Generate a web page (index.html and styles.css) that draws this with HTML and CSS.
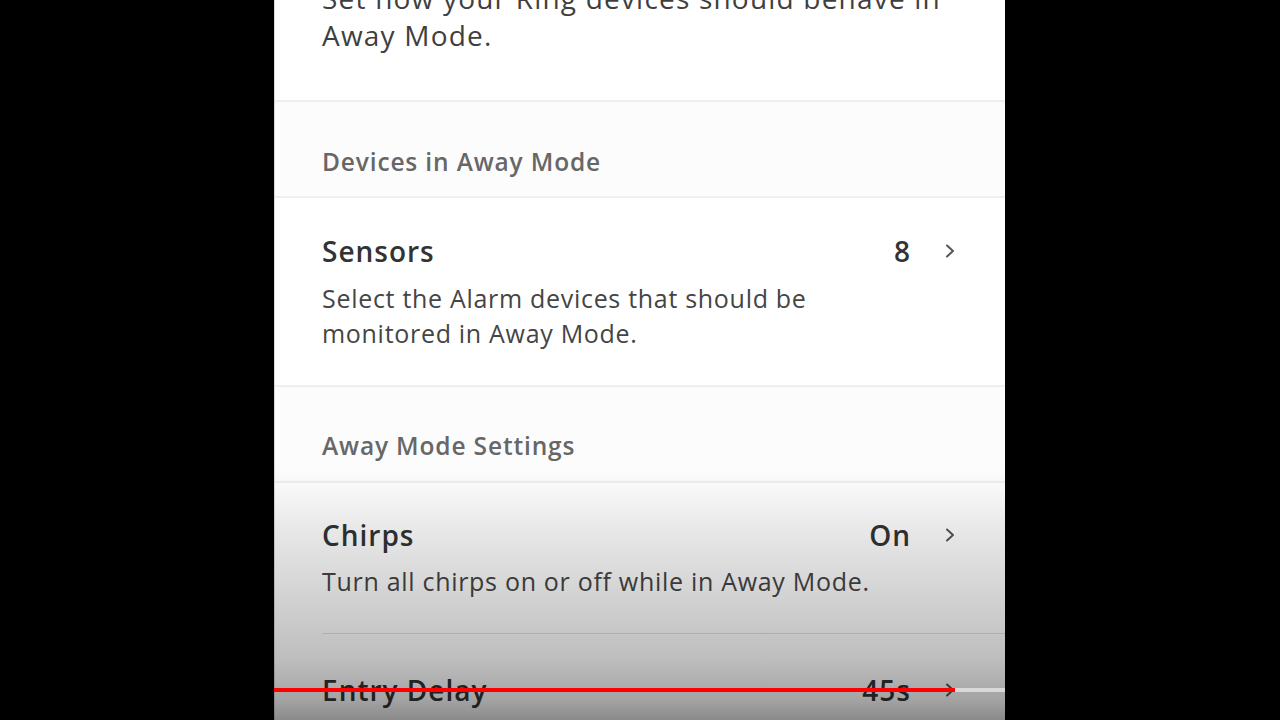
FILE: index.html
```html
<!DOCTYPE html>
<html lang="en">
<head>
<meta charset="utf-8">
<title>Away Mode</title>
<link rel="stylesheet" href="styles.css">
</head>
<body>
<div class="screen">
  <section class="intro">
    <p class="intro-text">Set how your Ring devices should behave in Away Mode.</p>
  </section>
  <div class="section-head">Devices in Away Mode</div>
  <div class="row row-sensors">
    <div class="row-top">
      <span class="row-title">Sensors</span>
      <span class="row-value">8</span>
      <svg class="chev" width="12" height="16" viewBox="0 0 12 16"><path d="M3 2.5 L9 8 L3 13.5" fill="none" stroke="#555" stroke-width="2" stroke-linecap="round" stroke-linejoin="round"/></svg>
    </div>
    <p class="row-desc">Select the Alarm devices that should be<br>monitored in Away Mode.</p>
  </div>
  <div class="section-head section-head-2">Away Mode Settings</div>
  <div class="row row-chirps">
    <div class="row-top">
      <span class="row-title">Chirps</span>
      <span class="row-value">On</span>
      <svg class="chev" width="12" height="16" viewBox="0 0 12 16"><path d="M3 2.5 L9 8 L3 13.5" fill="none" stroke="#555" stroke-width="2" stroke-linecap="round" stroke-linejoin="round"/></svg>
    </div>
    <p class="row-desc row-desc-tight">Turn all chirps on or off while in Away Mode.</p>
  </div>
  <div class="row row-entry">
    <div class="row-top">
      <span class="row-title">Entry Delay</span>
      <span class="row-value">45s</span>
      <svg class="chev" width="12" height="16" viewBox="0 0 12 16"><path d="M3 2.5 L9 8 L3 13.5" fill="none" stroke="#555" stroke-width="2" stroke-linecap="round" stroke-linejoin="round"/></svg>
    </div>
  </div>
</div>
<div class="shade"></div>
<div class="progress">
  <div class="progress-played"></div>
  <div class="progress-rest"></div>
</div>
</body>
</html>
```
FILE: styles.css
```css
html, body {
  margin: 0;
  padding: 0;
  width: 1280px;
  height: 720px;
  overflow: hidden;
  background: #000;
  font-family: "Open Sans", "Noto Sans", sans-serif;
}

.screen {
  margin-left: 274px;
  width: 731px;
  height: 720px;
  background: #fff;
  box-sizing: border-box;
  border-left: 1px solid #d8d8d8;
  overflow: hidden;
}

.intro {
  height: 102px;
  padding-left: 47px;
  border-bottom: 2px solid #efefef;
  box-sizing: border-box;
  overflow: hidden;
}

.intro-text {
  margin: -20px 0 0 0;
  width: 650px;
  font-size: 28px;
  letter-spacing: 1.2px;
  line-height: 37px;
  color: #3f3f3f;
}

.section-head {
  height: 96px;
  box-sizing: border-box;
  padding: 44px 0 0 47px;
  background: #fcfcfd;
  border-bottom: 2px solid #efefef;
  font-size: 24.5px;
  letter-spacing: 0.85px;
  line-height: 32px;
  font-weight: 600;
  color: #676767;
}

.section-head-2 {
  padding-top: 43px;
}

.row {
  box-sizing: border-box;
  padding-left: 47px;
  padding-right: 49px;
}

.row-sensors {
  height: 189px;
  padding-top: 35px;
  border-bottom: 2px solid #efefef;
}

.row-chirps {
  height: 151px;
  padding-top: 34px;
  position: relative;
}

.row-chirps::after {
  content: "";
  position: absolute;
  left: 47px;
  right: 0;
  bottom: 0;
  height: 1px;
  background: #e2e2e2;
}

.row-entry {
  padding-top: 38px;
}

.row-top {
  display: flex;
  align-items: center;
  height: 36px;
}

.row-title {
  flex: 1;
  font-size: 28px;
  letter-spacing: 1px;
  font-weight: 600;
  color: #333;
  line-height: 36px;
}

.row-value {
  font-size: 28px;
  letter-spacing: 1px;
  font-weight: 600;
  color: #333;
  line-height: 36px;
  margin-right: 33px;
}

.chev {
  display: block;
}

.row-desc {
  margin: 12px 0 0 0;
  font-size: 25px;
  letter-spacing: 0.7px;
  line-height: 35px;
  color: #454545;
}

.row-desc-tight {
  margin-top: 11px;
}

.shade {
  position: absolute;
  left: 0;
  top: 0;
  width: 1280px;
  height: 720px;
  pointer-events: none;
  background: linear-gradient(to bottom,
    rgba(0,0,0,0) 0px,
    rgba(0,0,0,0) 470px,
    rgba(0,0,0,0.08) 520px,
    rgba(0,0,0,0.18) 600px,
    rgba(0,0,0,0.26) 660px,
    rgba(0,0,0,0.36) 700px,
    rgba(0,0,0,0.46) 720px);
}

.progress {
  position: absolute;
  left: 274px;
  top: 688px;
  width: 731px;
  height: 4px;
  display: flex;
}

.progress-played {
  width: 681px;
  background: #f00;
}

.progress-rest {
  flex: 1;
  background: rgba(255,255,255,0.55);
}
```
